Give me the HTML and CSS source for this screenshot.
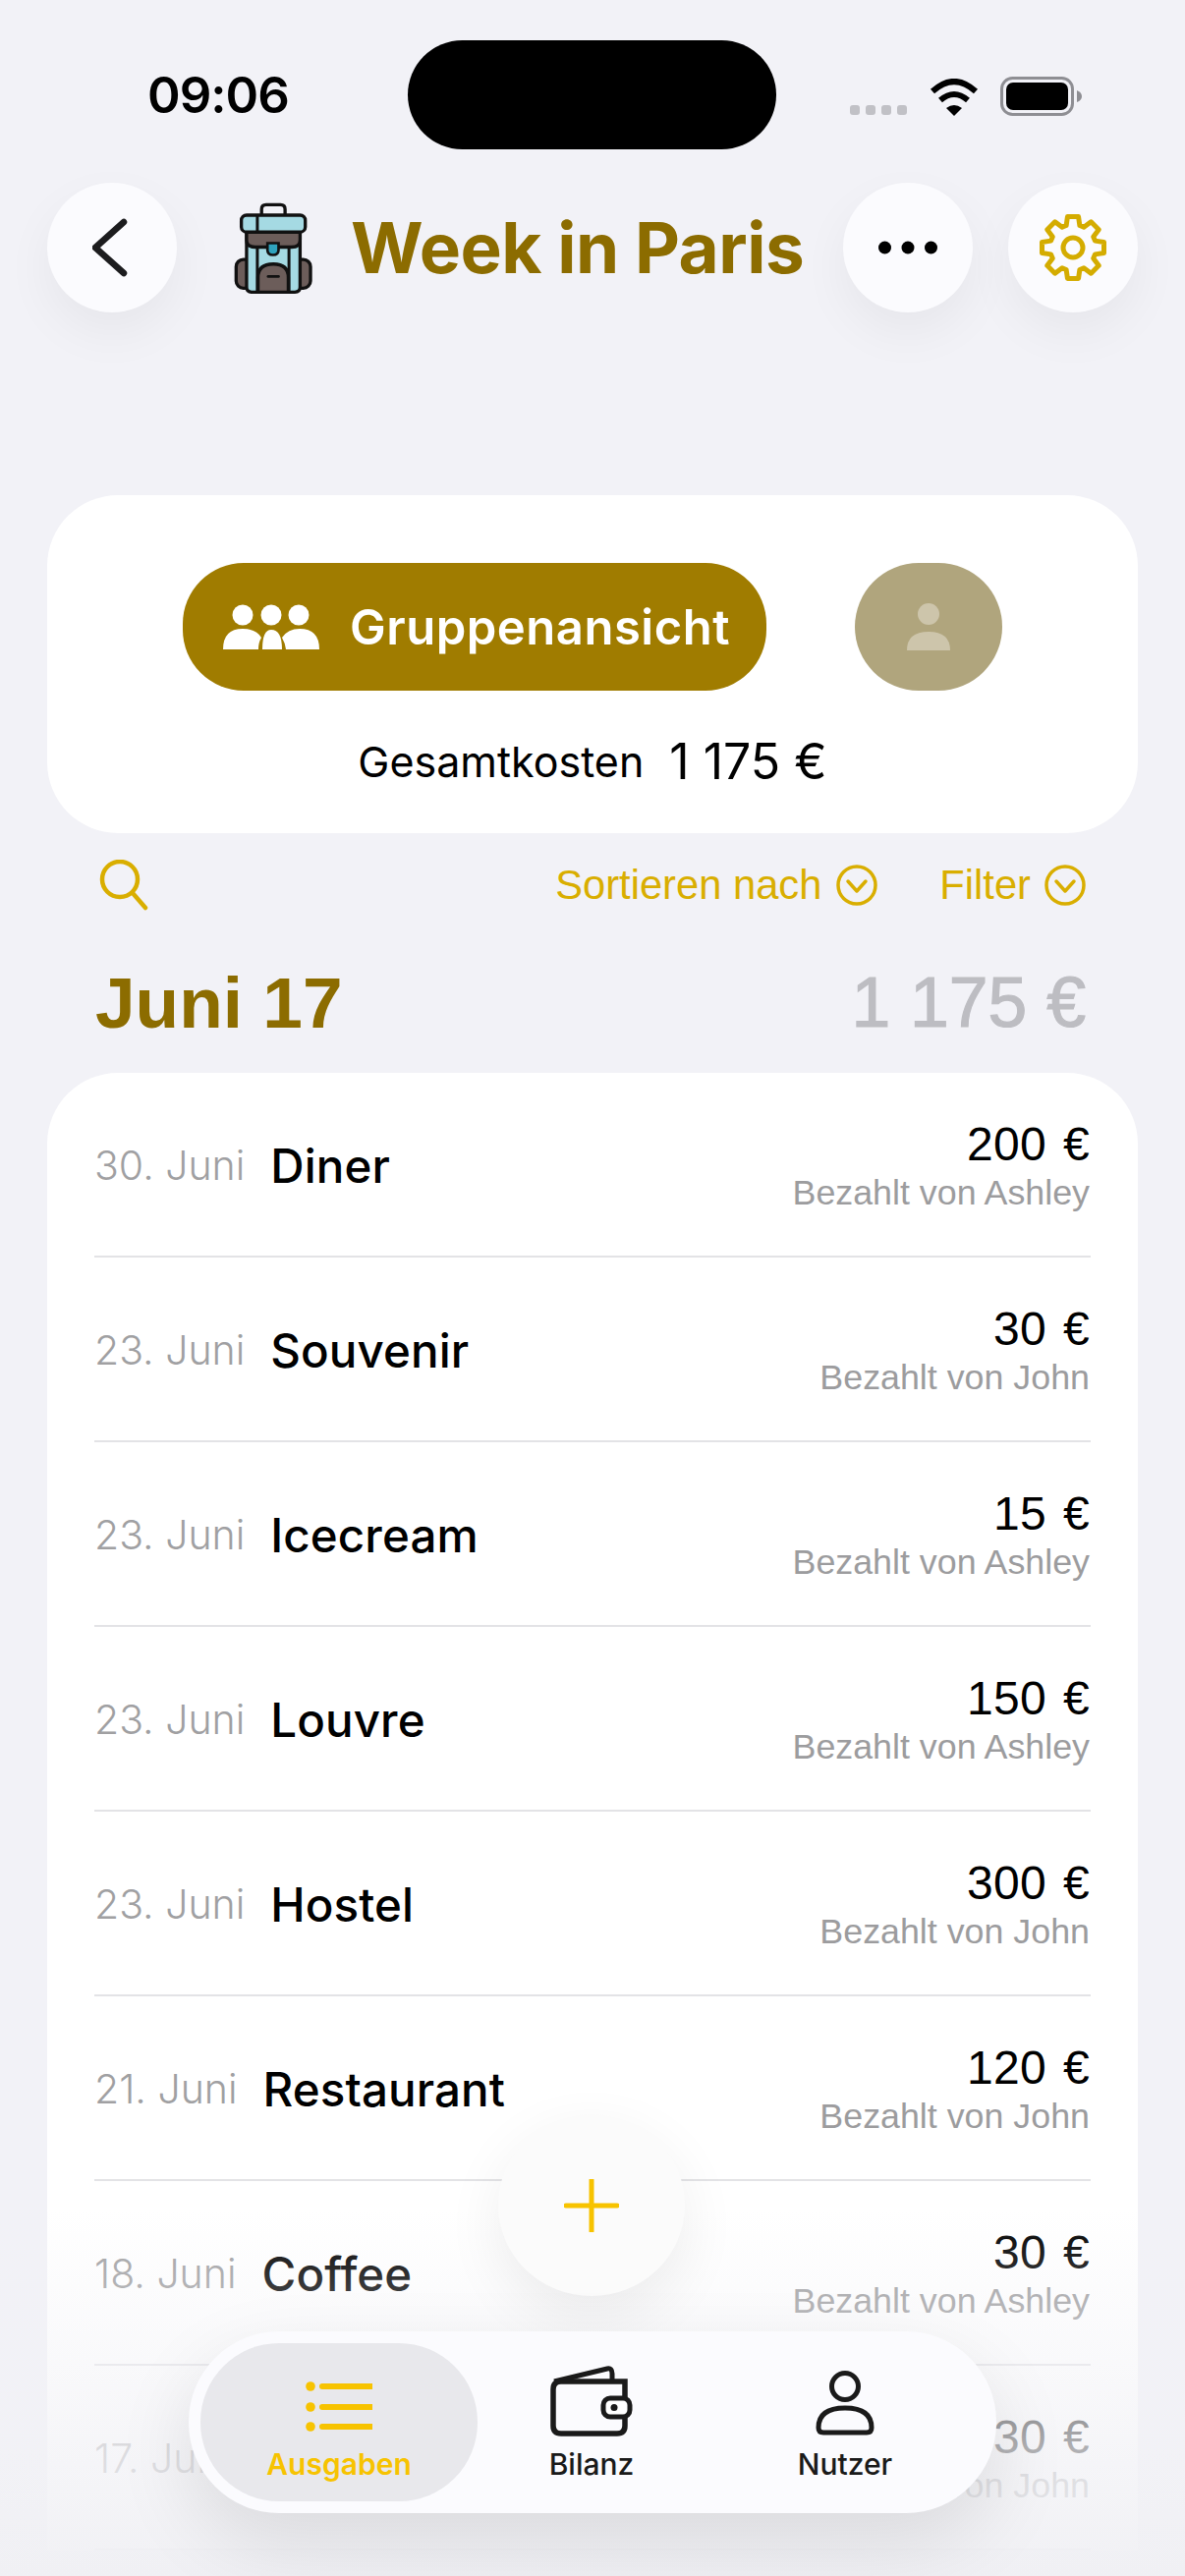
FILE: index.html
```html
<!DOCTYPE html>
<html lang="de">
<head>
    <meta charset="utf-8">
    <title>Week in Paris</title>
    <link rel="stylesheet" href="styles.css">
</head>
<body>
<div class="phone">

    <div class="status">
        <span class="time">09:06</span>
        <div class="island"></div>
        <div class="status-icons">
            <div class="cell"><i></i><i></i><i></i><i></i></div>
            <svg class="wifi" width="50" height="38" viewBox="0 0 50 38">
                <path d="M3 13 Q25 -7 47 13" fill="none" stroke="#000" stroke-width="6"/>
                <path d="M11 22 Q25 10 39 22" fill="none" stroke="#000" stroke-width="6"/>
                <path d="M17 30 Q25 24 33 30 L25 38 Z" fill="#000"/>
            </svg>
            <svg class="battery" width="83" height="40" viewBox="0 0 83 40">
                <rect x="1.5" y="1.5" width="72" height="37" rx="11" fill="none" stroke="#8e8e93" stroke-width="3"/>
                <rect x="6" y="6" width="63" height="28" rx="7" fill="#000"/>
                <path d="M78 14 Q83 16 83 20 Q83 24 78 26 Z" fill="#8e8e93"/>
            </svg>
        </div>
    </div>

    <header class="top">
        <button class="round">
            <svg width="40" height="60" viewBox="0 0 40 60">
                <path d="M32 4 L3 30 L32 56" fill="none" stroke="#1c1c1e" stroke-width="6.5" stroke-linecap="round" stroke-linejoin="round"/>
            </svg>
        </button>
        <svg class="pack" width="83" height="97" viewBox="170 70 250 290">
            <!-- backpack: pockets first, body over them -->
            <path d="M258 112 V96 Q258 82 272 82 H316 Q330 82 330 96 V112" fill="none" stroke="#111" stroke-width="10"/>
            <rect x="180" y="250" width="50" height="88" rx="22" fill="#6c5d5a" stroke="#111" stroke-width="10"/>
            <rect x="358" y="250" width="50" height="88" rx="22" fill="#6c5d5a" stroke="#111" stroke-width="10"/>
            <path d="M212 165 H376 V335 Q376 350 360 350 H228 Q212 350 212 335 Z" fill="#a5dae3" stroke="#111" stroke-width="10"/>
            <path d="M212 165 H376 V190 Q376 212 350 212 H238 Q212 212 212 190 Z" fill="#6c5d5a" stroke="#111" stroke-width="10"/>
            <path d="M245 212 V350 M342 212 V350" stroke="#111" stroke-width="9"/>
            <path d="M247 350 V305 Q247 264 294 264 Q340 264 340 305 V350 Z" fill="#6c5d5a" stroke="#111" stroke-width="10"/>
            <path d="M278 302 H310" stroke="#111" stroke-width="8" stroke-linecap="round"/>
            <rect x="196" y="114" width="196" height="52" rx="16" fill="#a5dae3" stroke="#111" stroke-width="10"/>
            <path d="M245 114 V166" stroke="#111" stroke-width="9"/>
            <path d="M276 200 H310 V220 Q310 236 293 236 Q276 236 276 220 Z" fill="#2fa3bd" stroke="#111" stroke-width="8"/>
        </svg>
        <h1 class="trip">Week in Paris</h1>
        <button class="round more">
            <svg width="60" height="14" viewBox="0 0 60 14">
                <circle cx="6.5" cy="7" r="6.5"/><circle cx="30" cy="7" r="6.5"/><circle cx="53.5" cy="7" r="6.5"/>
            </svg>
        </button>
        <button class="round">
            <svg width="72" height="72" viewBox="-36 -36 72 72">
                <path d="M-6.87 -22.47 L-5.56 -31.51 L5.56 -31.51 L6.87 -22.47 L11.03 -20.75 L18.35 -26.21 L26.21 -18.35 L20.75 -11.03 L22.47 -6.87 L31.51 -5.56 L31.51 5.56 L22.47 6.87 L20.75 11.03 L26.21 18.35 L18.35 26.21 L11.03 20.75 L6.87 22.47 L5.56 31.51 L-5.56 31.51 L-6.87 22.47 L-11.03 20.75 L-18.35 26.21 L-26.21 18.35 L-20.75 11.03 L-22.47 6.87 L-31.51 5.56 L-31.51 -5.56 L-22.47 -6.87 L-20.75 -11.03 L-26.21 -18.35 L-18.35 -26.21 L-11.03 -20.75 Z" fill="none" stroke="#d4ac00" stroke-width="5" stroke-linejoin="round"/>
                <circle r="10" fill="none" stroke="#d4ac00" stroke-width="5"/>
            </svg>
        </button>
    </header>

    <section class="summary">
        <div class="views">
            <button class="view-group">
                <svg width="98" height="46" viewBox="0 0 98 46" fill="#fff">
                    <circle cx="20" cy="11" r="10.5"/><circle cx="49" cy="11" r="10.5"/><circle cx="77" cy="11" r="10.5"/>
                    <path d="M0 46 Q0 25 20 25 Q34 25 39 34 Q36 39 36 46 Z"/>
                    <path d="M98 46 Q98 25 78 25 Q66 25 60 34 Q63 39 64 46 Z"/>
                    <path d="M40 46 Q40 26 49 26 Q60 26 60 46 Z"/>
                </svg>
                Gruppenansicht
            </button>
            <button class="view-single">
                <svg width="44" height="48" viewBox="0 0 44 48" fill="#cdc5ab">
                    <circle cx="22" cy="11" r="11"/>
                    <path d="M0 48 Q0 29 22 29 Q44 29 44 48 Z"/>
                </svg>
            </button>
        </div>
        <p class="total"><span>Gesamtkosten</span> <b>1 175 €</b></p>
    </section>

    <div class="tools">
        <svg width="50" height="52" viewBox="0 0 50 52">
            <circle cx="21" cy="20" r="18" fill="none" stroke="#d9ae00" stroke-width="4.5"/>
            <path d="M34 34 L47 49" stroke="#d9ae00" stroke-width="4.5" stroke-linecap="round"/>
        </svg>
        <a class="pick sort">Sortieren nach
            <svg width="42" height="42" viewBox="0 0 42 42"><circle cx="21" cy="21" r="19" /><path d="M12 17 L21 27 L30 17"/></svg>
        </a>
        <a class="pick">Filter
            <svg width="42" height="42" viewBox="0 0 42 42"><circle cx="21" cy="21" r="19" /><path d="M12 17 L21 27 L30 17"/></svg>
        </a>
    </div>

    <div class="month">
        <h2>Juni 17</h2>
        <span>1 175 €</span>
    </div>

    <ul class="list">
        <li><span class="date">30. Juni</span><span class="what">Diner</span><div class="cost"><b>200 €</b><small>Bezahlt von Ashley</small></div></li>
        <li><span class="date">23. Juni</span><span class="what">Souvenir</span><div class="cost"><b>30 €</b><small>Bezahlt von John</small></div></li>
        <li><span class="date">23. Juni</span><span class="what">Icecream</span><div class="cost"><b>15 €</b><small>Bezahlt von Ashley</small></div></li>
        <li><span class="date">23. Juni</span><span class="what">Louvre</span><div class="cost"><b>150 €</b><small>Bezahlt von Ashley</small></div></li>
        <li><span class="date">23. Juni</span><span class="what">Hostel</span><div class="cost"><b>300 €</b><small>Bezahlt von John</small></div></li>
        <li><span class="date">21. Juni</span><span class="what">Restaurant</span><div class="cost"><b>120 €</b><small>Bezahlt von John</small></div></li>
        <li><span class="date">18. Juni</span><span class="what">Coffee</span><div class="cost"><b>30 €</b><small>Bezahlt von Ashley</small></div></li>
        <li><span class="date">17. Juni</span><span class="what"></span><div class="cost"><b>30 €</b><small>Bezahlt von John</small></div></li>
    </ul>

    <div class="fade"></div>

    <button class="add">
        <svg width="56" height="54" viewBox="0 0 56 54">
            <path d="M2 27 H54 M28 1 V53" stroke="#f7c300" stroke-width="5" stroke-linecap="round"/>
        </svg>
    </button>

    <nav class="tabs">
        <a class="tab on">
            <svg width="68" height="60" viewBox="0 0 68 60">
                <circle cx="5" cy="9" r="4.8"/><circle cx="5" cy="30" r="4.8"/><circle cx="5" cy="50" r="4.8"/>
                <path d="M17 9 H67 M17 30 H67 M17 50 H67" stroke="#f7c300" stroke-width="6" stroke-linecap="round"/>
            </svg>
            Ausgaben
        </a>
        <a class="tab">
            <svg width="84" height="72" viewBox="0 0 84 72">
                <path d="M4 16 L58 3 Q63 2 63 8 V16" fill="none" stroke="#1a1a1a" stroke-width="5" stroke-linejoin="round"/>
                <path d="M76 33 V16 H11 Q3 16 3 24 V61 Q3 69 11 69 H68 Q76 69 76 61 V52" fill="none" stroke="#1a1a1a" stroke-width="5.5"/>
                <rect x="54" y="33" width="27" height="19" rx="7" fill="#fff" stroke="#1a1a1a" stroke-width="5"/>
                <circle cx="65" cy="42.5" r="3.5" fill="#1a1a1a"/>
            </svg>
            Bilanz
        </a>
        <a class="tab">
            <svg width="62" height="68" viewBox="0 0 62 68">
                <circle cx="31" cy="17" r="13.5" fill="none" stroke="#1a1a1a" stroke-width="5"/>
                <path d="M4 59 Q4 39 31 39 Q58 39 58 59 Q58 64 53 64 H9 Q4 64 4 59 Z" fill="none" stroke="#1a1a1a" stroke-width="5" stroke-linejoin="round"/>
            </svg>
            Nutzer
        </a>
    </nav>

</div>
</body>
</html>
```

FILE: styles.css
```css
* {
    box-sizing: border-box;
}
html, body {
    margin: 0;
    padding: 0;
}
body {
    font-family: Inter, "Liberation Sans", sans-serif;
    color: #000;
}
button {
    border: 0;
    padding: 0;
    font: inherit;
    color: inherit;
}
h1, h2, p, ul {
    margin: 0;
    padding: 0;
}

.phone {
    position: relative;
    width: 1206px;
    height: 2622px;
    overflow: hidden;
    background: #f2f2f7;
}

/* status bar */
.status {
    height: 186px;
    padding: 41px 0 0 150px;
    display: flex;
    align-items: flex-start;
}
.time {
    width: 265px;
    margin-top: 25px;
    font-size: 51px;
    line-height: 62px;
    font-weight: 600;
    letter-spacing: -1px;
}
.island {
    width: 375px;
    height: 111px;
    border-radius: 56px;
    background: #000;
}
.status-icons {
    margin: 37px 0 0 75px;
    display: flex;
    align-items: flex-end;
    gap: 23px;
}
.cell {
    display: flex;
    gap: 6px;
    margin-bottom: 1px;
}
.cell i {
    width: 10px;
    height: 10px;
    border-radius: 3px;
    background: #c1c1c6;
}
.battery {
    margin-left: -1px;
}

/* header row */
.top {
    height: 132px;
    padding: 0 48px;
    display: flex;
    align-items: center;
}
.round {
    width: 132px;
    height: 132px;
    border-radius: 50%;
    background: #fbfbfe;
    box-shadow: 0 20px 50px rgba(0, 0, 0, 0.05);
    display: flex;
    align-items: center;
    justify-content: center;
}
.more {
    margin-left: auto;
    margin-right: 36px;
}
.more svg {
    fill: #000;
}
.pack {
    margin: 0 0 0 57px;
    flex: none;
}
.trip {
    margin-left: 37px;
    font-size: 71px;
    font-weight: 700;
    letter-spacing: -0.5px;
    color: #8c6c00;
}

/* totals card */
.summary {
    margin: 186px 48px 0;
    height: 344px;
    padding-top: 69px;
    border-radius: 72px;
    background: #fff;
}
.views {
    display: flex;
    justify-content: center;
    gap: 90px;
}
.view-group {
    width: 594px;
    height: 130px;
    padding-left: 4px;
    border-radius: 62px;
    background: #a07c00;
    color: #fff;
    font-size: 49px;
    font-weight: 600;
    letter-spacing: 0.5px;
    display: flex;
    align-items: center;
    justify-content: center;
    gap: 31px;
}
.view-single {
    width: 150px;
    height: 130px;
    border-radius: 65px;
    background: #b0a57d;
    display: flex;
    align-items: center;
    justify-content: center;
}
.total {
    margin-top: 42px;
    display: flex;
    justify-content: center;
    align-items: center;
    gap: 26px;
    font-size: 43px;
    line-height: 60px;
    font-weight: 400;
}
.total b {
    font-size: 50px;
    font-weight: 400;
}

/* search, sort, filter */
.tools {
    height: 60px;
    margin-top: 23px;
    padding: 0 101px 0 101px;
    display: flex;
    align-items: center;
    gap: 36px;
}
.pick {
    display: flex;
    align-items: center;
    gap: 14px;
    font-family: "Liberation Sans", Arial, sans-serif;
    font-size: 41.7px;
    color: #d9ae00;
}
.pick svg {
    fill: none;
    stroke: #d9ae00;
    stroke-width: 3.5;
    stroke-linecap: round;
    stroke-linejoin: round;
}
.sort {
    margin-left: auto;
    gap: 15px;
    margin-right: 27px;
}

/* month heading */
.month {
    margin-top: 46px;
    height: 86px;
    padding: 0 101px 0 97px;
    display: flex;
    justify-content: space-between;
    align-items: center;
    font-family: "Liberation Sans", Arial, sans-serif;
}
.month h2 {
    font-size: 73px;
    font-weight: 700;
    color: #8c6c00;
}
.month span {
    font-size: 71.5px;
    -webkit-text-stroke: 1.2px #bdbdc2;
    color: #bdbdc2;
}

/* expenses */
.list {
    margin: 29px 48px 0;
    padding: 0 48px;
    list-style: none;
    border-radius: 72px 72px 0 0;
    background: #fff;
}
.list li {
    height: 188px;
    display: flex;
    align-items: center;
    border-bottom: 2px solid #e3e3e6;
}
.date {
    font-size: 41px;
    font-weight: 300;
    color: #a0a0a2;
    margin-top: 2px;
    margin-right: 26px;
}
.what {
    font-size: 47.5px;
    font-weight: 500;
    letter-spacing: 0.1px;
    margin-top: 2px;
}
.cost {
    margin-left: auto;
    margin-top: 6px;
    margin-right: 1px;
    text-align: right;
    display: flex;
    flex-direction: column;
    font-family: "Liberation Sans", Arial, sans-serif;
}
.cost b {
    font-size: 48px;
    line-height: 52px;
    font-weight: 400;
    letter-spacing: 0.4px;
    word-spacing: 3px;
}
.cost small {
    font-size: 35.8px;
    line-height: 47px;
    color: #9c9c9e;
}

/* bottom overlays */
.fade {
    position: absolute;
    left: 0;
    right: 0;
    top: 2250px;
    bottom: 0;
    background: linear-gradient(rgba(242, 242, 246, 0), rgba(242, 242, 246, 0.72) 65%, rgba(240, 240, 244, 0.97));
}
.add {
    position: absolute;
    left: 507px;
    top: 2152px;
    width: 190px;
    height: 185px;
    border-radius: 50%;
    background: #fbfbfb;
    box-shadow: 0 20px 60px rgba(0, 0, 0, 0.07);
    display: flex;
    align-items: center;
    justify-content: center;
}
.tabs {
    position: absolute;
    left: 192px;
    top: 2373px;
    width: 822px;
    height: 185px;
    padding: 12px;
    border-radius: 92px;
    background: #fbfbfe;
    box-shadow: 0 30px 80px rgba(0, 0, 0, 0.1);
    display: grid;
    grid-template-columns: 282px 232px 1fr;
}
.tab {
    display: flex;
    flex-direction: column;
    align-items: center;
    justify-content: flex-end;
    gap: 10px;
    padding-bottom: 20px;
    font-size: 30px;
    font-weight: 500;
    color: #1a1a1a;
}
.tab.on {
    border-radius: 80px;
    background: #e8e8ec;
    color: #f7c300;
    font-weight: 600;
}
.tab.on svg {
    fill: #f7c300;
}
```
